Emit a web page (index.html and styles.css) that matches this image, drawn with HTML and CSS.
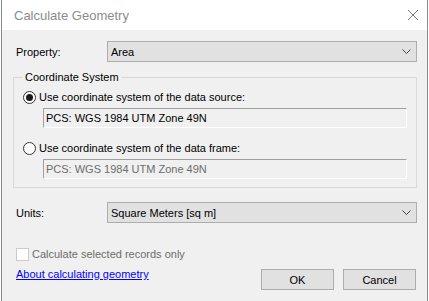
FILE: index.html
```html
<!DOCTYPE html>
<html lang="en">
<head>
  <meta charset="UTF-8">
  <title>Calculate Geometry</title>
  <link rel="stylesheet" href="styles.css">
</head>
<body>
  <div class="window">
    <div class="titlebar">
      <span class="title">Calculate Geometry</span>
      <svg class="close" width="12" height="12" viewBox="0 0 12 12">
        <path d="M1 1 L11 11 M11 1 L1 11" stroke="#7a7a7a" stroke-width="1" fill="none"/>
      </svg>
    </div>

    <div class="content">
      <div class="row first">
        <label class="label">Property:</label>
        <div class="combo">
          <span>Area</span>
          <svg width="9" height="5" viewBox="0 0 9 5"><path d="M0.5 0.5 L4.5 4.5 L8.5 0.5" stroke="#444" fill="none"/></svg>
        </div>
      </div>

      <fieldset class="group">
        <legend>Coordinate System</legend>
        <div class="option">
          <span class="radio on"></span>
          <span>Use coordinate system of the data source:</span>
        </div>
        <div class="textbox">PCS: WGS 1984 UTM Zone 49N</div>
        <div class="option second">
          <span class="radio"></span>
          <span>Use coordinate system of the data frame:</span>
        </div>
        <div class="textbox disabled">PCS: WGS 1984 UTM Zone 49N</div>
      </fieldset>

      <div class="row units">
        <label class="label">Units:</label>
        <div class="combo">
          <span>Square Meters [sq m]</span>
          <svg width="9" height="5" viewBox="0 0 9 5"><path d="M0.5 0.5 L4.5 4.5 L8.5 0.5" stroke="#444" fill="none"/></svg>
        </div>
      </div>

      <div class="check-row">
        <span class="checkbox"></span>
        <span>Calculate selected records only</span>
      </div>

      <div class="footer">
        <a href="#" class="help-link">About calculating geometry</a>
        <div class="buttons">
          <button class="btn">OK</button>
          <button class="btn">Cancel</button>
        </div>
      </div>
    </div>
  </div>
</body>
</html>
```

FILE: styles.css
```css
body {
  margin: 0;
  background-color: #fff;
  font-family: "Liberation Sans", Arial, sans-serif;
  font-size: 11px;
  color: #000;
}
.window {
  margin-left: 1px;
  width: 425px;
  height: 301px;
  border-left: 1px solid #8a8a8a;
  border-right: 1px solid #8a8a8a;
  background-color: #f0f0f0;
}
.titlebar {
  height: 30px;
  background-color: #fff;
  display: flex;
  align-items: center;
  justify-content: space-between;
  padding: 0 8px 0 12px;
}
.title {
  font-size: 13px;
  color: #8c8c8c;
}
.close {
  margin-top: -1px;
}
.content {
  padding: 0 10px 0 11px;
}
.row {
  display: flex;
  align-items: center;
  padding-left: 3px;
}
.row.first {
  margin-top: 11px;
}
.label {
  width: 91px;
}
.combo {
  flex: 1;
  height: 19px;
  border: 1px solid #adadad;
  background-color: #e1e1e1;
  display: flex;
  align-items: center;
  justify-content: space-between;
  padding: 0 5px 0 3px;
}
.group {
  margin: 7px 0 0 0;
  padding: 0 9px 8px 9px;
  border: 1px solid #d9d9d9;
  min-width: 0;
}
.group legend {
  padding: 0 2px;
  line-height: 16px;
}
.option {
  display: flex;
  align-items: center;
  gap: 3px;
  height: 16px;
  margin-top: 4px;
}
.option.second {
  margin-top: 12px;
}
.radio {
  width: 11px;
  height: 11px;
  border: 1px solid #333;
  border-radius: 50%;
  background-color: #fff;
  display: flex;
  align-items: center;
  justify-content: center;
}
.radio.on::after {
  content: "";
  width: 7px;
  height: 7px;
  border-radius: 50%;
  background-color: #1a1a1a;
}
.textbox {
  margin: 3px 0 0 20px;
  height: 18px;
  line-height: 18px;
  padding-left: 2px;
  border-top: 1px solid #a0a0a0;
  border-left: 1px solid #a0a0a0;
  border-bottom: 1px solid #fff;
  border-right: 1px solid #fff;
}
.textbox.disabled {
  color: #6d6d6d;
}
.row.units {
  margin-top: 14px;
}
.check-row {
  display: flex;
  align-items: center;
  gap: 3px;
  height: 16px;
  margin-top: 23px;
  padding-left: 3px;
  color: #6d6d6d;
}
.checkbox {
  width: 11px;
  height: 11px;
  border: 1px solid #cccccc;
  background-color: #fff;
}
.footer {
  display: flex;
  justify-content: space-between;
  align-items: flex-start;
  margin-top: 4px;
  padding-left: 3px;
}
.help-link {
  color: #0000ff;
  line-height: 16px;
}
.buttons {
  display: flex;
  gap: 9px;
  margin-top: 3px;
  margin-right: 1px;
}
.btn {
  width: 73px;
  height: 21px;
  border: 1px solid #adadad;
  background-color: #e1e1e1;
  font-family: inherit;
  font-size: 11px;
  padding: 0;
}
```
